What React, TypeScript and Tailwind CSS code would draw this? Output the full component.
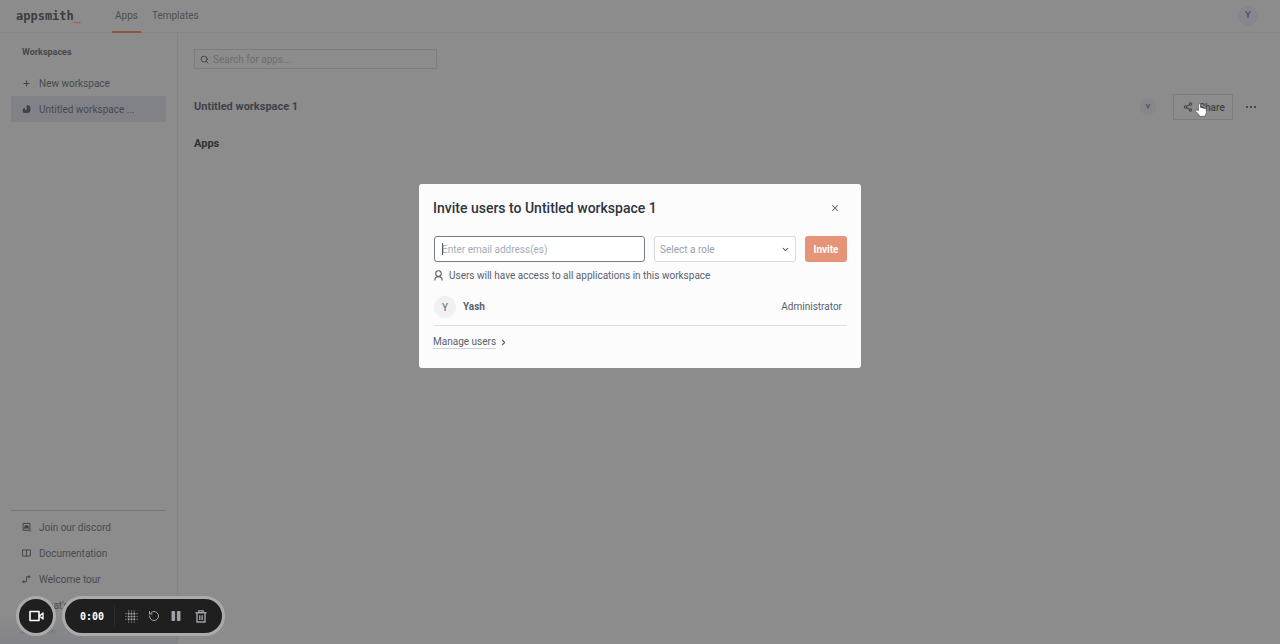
import type { ReactNode } from 'react'
import { ChevronDown, ChevronRight, Gift, Plus, RotateCcw, Search, Share2, X } from 'lucide-react'

const FONT = "font-['Roboto','Liberation_Sans',sans-serif]"

/* ---------- Icons ---------- */

function WorkspaceIcon() {
  return (
    <svg width="10" height="10" viewBox="0 0 9 9" fill="currentColor" aria-hidden="true">
      <path d="M4.6.8h1.6A2.4 2.4 0 0 1 8.4 3v2.2a3.2 3.2 0 0 1-3.2 3.2H2.4A1.6 1.6 0 0 1 .8 6.8V4.2L3 3.2v2.2h1.6V.8Z" />
    </svg>
  )
}

function DiscordIcon() {
  return (
    <svg width="10" height="10" viewBox="0 0 10 10" fill="none" stroke="currentColor" aria-hidden="true">
      <path d="M1.2 1h7.6v8.8L7.6 8.6H1.2V1Z" strokeWidth="1.1" />
      <path d="M3 7V4.2L4 3.4h2l1 .8V7L6 6.2H4L3 7Z" fill="currentColor" strokeWidth="0.8" />
    </svg>
  )
}

function BookIcon() {
  return (
    <svg width="10" height="10" viewBox="0 0 10 10" fill="none" stroke="currentColor" aria-hidden="true">
      <path d="M.6 1.6h8.8v6.8H.6zM5 1.6v7.8" strokeWidth="1" />
    </svg>
  )
}

function RouteIcon() {
  return (
    <svg width="10" height="10" viewBox="0 0 10 10" fill="none" stroke="currentColor" aria-hidden="true">
      <path d="M1.8 8H5V2.5h3" strokeWidth="1" />
      <path d="m7.4 1 2 1.5-2 1.5V1Z" fill="currentColor" strokeWidth="0.4" />
      <circle cx="1.8" cy="8" r="1.3" fill="currentColor" stroke="none" />
    </svg>
  )
}

function UserIcon() {
  return (
    <svg width="9" height="11" viewBox="0 0 9 11" fill="none" stroke="currentColor" strokeWidth="1.1" aria-hidden="true">
      <circle cx="4.5" cy="3.6" r="2.8" />
      <path d="M.8 10.6c0-2.4 1.5-4 3.7-4s3.7 1.6 3.7 4" />
    </svg>
  )
}

function CameraIcon() {
  return (
    <svg width="15" height="12" viewBox="0 0 15 12" fill="none" stroke="currentColor" strokeWidth="1.6" aria-hidden="true">
      <path d="M1 1.5h9v9H1z" strokeLinejoin="round" />
      <path d="m10.5 6 3.5-3v6l-3.5-3Z" strokeWidth="1.3" strokeLinejoin="round" />
    </svg>
  )
}

function DotGridIcon() {
  const dots: [number, number, number][] = []
  for (let y = 0; y < 5; y++) {
    for (let x = 0; x < 5; x++) {
      const dx = Math.abs(x - 2)
      const dy = Math.abs(y - 2)
      // corners stay empty, the middle 3x3 is heavier
      if (dx + dy === 4) continue
      dots.push([x * 2.8 + 0.9, y * 2.8 + 0.9, dx < 2 && dy < 2 ? 1.1 : 0.6])
    }
  }
  return (
    <svg width="13" height="13" viewBox="0 0 13 13" fill="currentColor" aria-hidden="true">
      {dots.map(([x, y, r]) => (
        <circle key={`${x}-${y}`} cx={x} cy={y} r={r} />
      ))}
    </svg>
  )
}

function PauseIcon() {
  return (
    <svg width="10" height="12" viewBox="0 0 10 12" fill="currentColor" aria-hidden="true">
      <rect x="0.5" y="1" width="3.6" height="10" rx="0.8" />
      <rect x="5.9" y="1" width="3.6" height="10" rx="0.8" />
    </svg>
  )
}

function TrashIcon() {
  return (
    <svg width="12" height="13" viewBox="0 0 12 13" fill="none" stroke="currentColor" strokeWidth="1.4" aria-hidden="true">
      <path d="M.5 2.8h11M3.8 2.8V.9h4.4v1.9M2 3v9h8V3M4.8 5.3v4.6M7.2 5.3v4.6" />
    </svg>
  )
}

function HandCursor() {
  return (
    <svg width="12" height="14" viewBox="0 0 12 14" aria-hidden="true">
      <path
        d="M3.4 7.4V1.8c0-1.4 2.1-1.4 2.1 0v2.9c.6-.4 1.5-.2 1.8.4.6-.4 1.5-.1 1.8.5 1-.4 2.2.1 2.2 1.2v2.6c0 1.2-.7 1.8-1 2.6v1.3H4.2v-1.2L.9 8.6c-.8-1 .5-2.2 1.5-1.5l1 .8Z"
        fill="#fff"
        stroke="#444"
        strokeWidth="0.6"
      />
    </svg>
  )
}

/* ---------- Page ---------- */

function Header() {
  return (
    <header className="flex h-[33px] items-stretch border-b border-[#858585] pr-[22px] pl-4 text-[#4d5055]">
      <a href="#home" className="flex w-[90px] items-center font-['DejaVu_Sans_Mono',monospace] text-[12px] font-bold text-[#3c3d40]">
        appsmith<span className="text-[#a8604c]">_</span>
      </a>
      <nav className="flex flex-1 gap-2 text-[10px]">
        <a href="#apps" className="-mb-px ml-[6px] flex items-center border-b-2 border-[#93513f] px-[3px]">
          Apps
        </a>
        <a href="#templates" className="flex items-center px-[3px] pb-px">
          Templates
        </a>
      </nav>
      <button className="my-auto size-5 rounded-full bg-[#86868c] text-[9px] text-[#3f4250]">Y</button>
    </header>
  )
}

function SidebarItem({ icon, label, active }: { icon: ReactNode; label: string; active?: boolean }) {
  return (
    <a
      href="#item"
      className={
        active
          ? 'flex h-[26px] items-center gap-2 bg-[#818288] pl-[11px] text-[10px]'
          : 'flex h-[26px] items-center gap-2 pl-[11px] text-[10px]'
      }
    >
      <span className="flex w-[9px] justify-center text-[#3f4146]">{icon}</span>
      <span className="truncate">{label}</span>
    </a>
  )
}

function Sidebar() {
  return (
    <aside className="flex w-[178px] shrink-0 flex-col border-r border-[#838383] bg-linear-to-b from-[#8c8c8c] from-95% to-[#83848a] px-[11px] text-[#484a4f]">
      <h2 className="mt-[11px] pl-[11px] text-[9px] leading-4 font-bold">Workspaces</h2>
      <div className="mt-[10px]">
        <SidebarItem icon={<Plus size={9} strokeWidth={2.5} />} label="New workspace" />
        <SidebarItem active icon={<WorkspaceIcon />} label="Untitled workspace ..." />
      </div>
      <div className="mt-auto h-[134px] overflow-hidden border-t border-[#787878] pt-[3px]">
        <SidebarItem icon={<DiscordIcon />} label="Join our discord" />
        <SidebarItem icon={<BookIcon />} label="Documentation" />
        <SidebarItem icon={<RouteIcon />} label="Welcome tour" />
        <SidebarItem icon={<Gift size={9} />} label="What's new?" />
        <p className="mt-2 pl-[10px] text-[8px] leading-3 text-[#6f7075]">Appsmith</p>
      </div>
    </aside>
  )
}

function Workspace() {
  return (
    <main className="min-w-0 flex-1 pt-4 pr-[23px] pl-4">
      <label className="flex h-5 w-[243px] items-center gap-1 border border-[#7e7e7e] px-[5px] text-[#3f4146]">
        <Search size={9} strokeWidth={2.5} />
        <input
          type="search"
          aria-label="Search for apps"
          placeholder="Search for apps..."
          className="min-w-0 flex-1 bg-transparent text-[10px] outline-none placeholder:text-[#6b6d72]"
        />
      </label>
      <div className="mt-[25px] flex h-[26px] items-center">
        <h1 className="flex-1 text-[11px] font-bold text-[#3f414c]">Untitled workspace 1</h1>
        <span className="mr-[17px] flex size-4 items-center justify-center rounded-full bg-[#86868c] text-[8px] text-[#3f4250]">
          Y
        </span>
        <button className="relative flex h-[26px] w-[60px] items-center gap-[6px] border border-[#7c7c7c] pl-[9px] text-[10px] font-medium text-[#424449]">
          <Share2 size={10} strokeWidth={2.5} />
          Share
          <span className="absolute top-2 left-[21px]">
            <HandCursor />
          </span>
        </button>
        <button aria-label="More options" className="ml-[13px] flex gap-[2px] pr-px text-[#303236]">
          <span className="size-[2px] rounded-full bg-current" />
          <span className="size-[2px] rounded-full bg-current" />
          <span className="size-[2px] rounded-full bg-current" />
        </button>
      </div>
      <h2 className="mt-4 text-[11px] font-bold text-[#303236]">Apps</h2>
    </main>
  )
}

/* ---------- Invite dialog ---------- */

function InviteDialog() {
  return (
    <div className="absolute inset-0 flex items-start justify-center pt-[184px]">
      <section
        role="dialog"
        aria-labelledby="invite-title"
        className="w-[442px] rounded-[3px] bg-[#fcfcfc] px-[14px] pt-3 pb-[18px] text-[#5a616d]"
      >
        <div className="flex h-6 items-center justify-between">
          <h2 id="invite-title" className="text-[14px] font-medium text-[#2f3443]">
            Invite users to Untitled workspace 1
          </h2>
          <button aria-label="Close" className="mr-[7px]">
            <X size={10} strokeWidth={2.5} />
          </button>
        </div>
        <form className="mt-4 flex items-center pl-px" onSubmit={(e) => e.preventDefault()}>
          <div className="relative flex-1">
            <input
              type="email"
              aria-label="Email addresses"
              placeholder="Enter email address(es)"
              className="block h-[26px] w-full rounded-[3px] border border-[#777b83] bg-white px-[7px] text-[10px] outline-none placeholder:text-[#a5abb5]"
            />
            <span className="absolute top-[7px] left-2 h-3 w-px bg-[#555b66]" />
          </div>
          <div className="relative ml-[9px] w-[142px]">
            <select
              aria-label="Role"
              defaultValue=""
              className="block h-[26px] w-full appearance-none rounded-[3px] border border-[#d5d8dd] bg-white px-[5px] text-[10px] text-[#98a0ac]"
            >
              <option value="">Select a role</option>
              <option>Administrator</option>
            </select>
            <ChevronDown size={9} strokeWidth={3} className="absolute top-[9px] right-[6px]" />
          </div>
          <button type="submit" className="ml-[9px] h-[26px] w-[42px] rounded-[3px] bg-[#e69478] text-[10px] font-bold text-white">
            Invite
          </button>
        </form>
        <p className="mt-1 flex h-[18px] items-center gap-[6px] pl-px text-[10px]">
          <UserIcon />
          Users will have access to all applications in this workspace
        </p>
        <div className="mt-3 ml-px flex h-[30px] items-start border-b border-[#dde0e6] text-[10px]">
          <span className="flex size-[22px] items-center justify-center rounded-full bg-[#eff1f5]">Y</span>
          <span className="ml-[7px] flex-1 leading-[22px] font-bold">Yash</span>
          <span className="pr-[5px] leading-[22px]">Administrator</span>
        </div>
        <a href="#manage" className="mt-2 flex h-4 items-center gap-[3px] text-[10px] leading-3">
          <span className="border-b border-[#cfd3d9]">Manage users</span>
          <ChevronRight size={9} strokeWidth={3} />
        </a>
      </section>
    </div>
  )
}

/* ---------- Recorder controls ---------- */

function RecorderBar() {
  return (
    <div className="absolute bottom-2 left-4 flex gap-[6px]">
      <button aria-label="Camera" className="flex size-10 items-center justify-center rounded-full border-3 border-[#ababab] bg-[#1f1f1f] text-white">
        <CameraIcon />
      </button>
      <div className="flex h-10 w-[163px] items-center rounded-full border-3 border-[#ababab] bg-[#1f1f1f] pl-[15px] text-[#a0a0a6]">
        <span className="w-[34px] font-['DejaVu_Sans_Mono',monospace] text-[10px] font-bold text-white">0:00</span>
        <span className="h-5 w-px bg-[#2d2d2d]" />
        <button aria-label="Blur" className="ml-[10px]">
          <DotGridIcon />
        </button>
        <button aria-label="Restart" className="ml-[10px]">
          <RotateCcw size={12} />
        </button>
        <button aria-label="Pause" className="ml-[11px]">
          <PauseIcon />
        </button>
        <button aria-label="Delete" className="ml-[14px]">
          <TrashIcon />
        </button>
      </div>
    </div>
  )
}

export default function App() {
  return (
    <div className={`relative flex min-h-screen flex-col overflow-hidden bg-[#8c8c8c] ${FONT}`}>
      <Header />
      <div className="flex flex-1">
        <Sidebar />
        <Workspace />
      </div>
      <InviteDialog />
      <RecorderBar />
    </div>
  )
}
